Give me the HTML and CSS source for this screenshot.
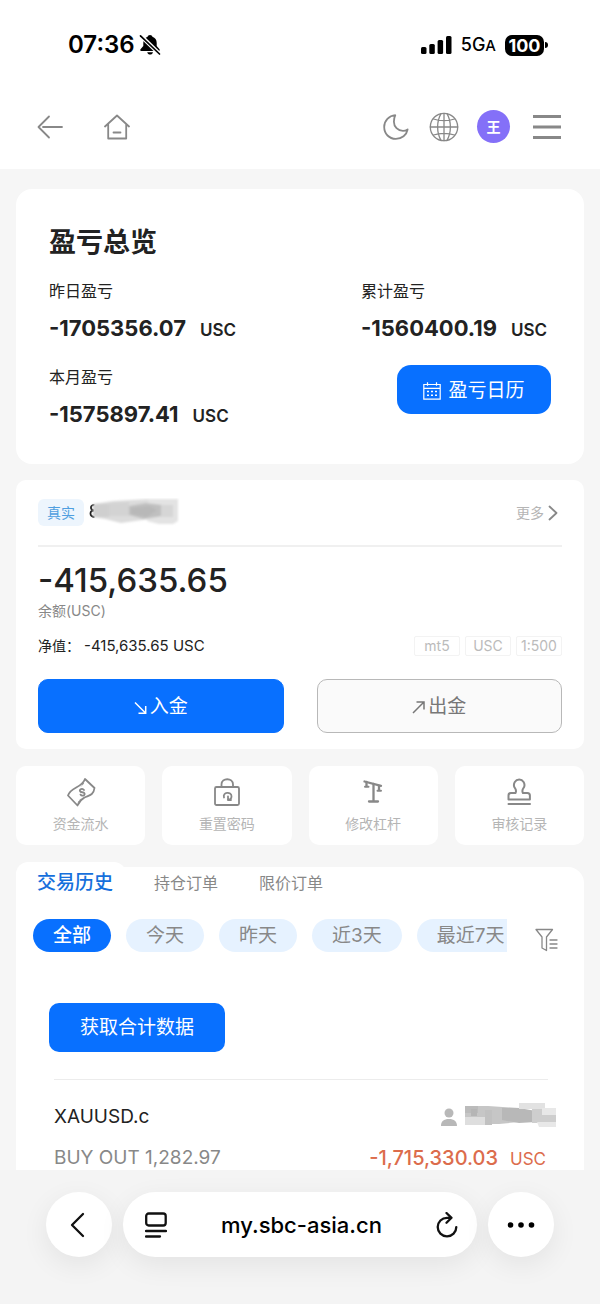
FILE: index.html
```
<!DOCTYPE html>
<html lang="zh-CN">
<head>
<meta charset="utf-8">
<meta name="viewport" content="width=device-width, initial-scale=1">
<title>盈亏总览</title>
<link rel="stylesheet" href="styles.css">
</head>
<body>
<div class="screen">
  <div class="status">
    <div class="status-left">
      <span class="clock">07:36</span>
      <svg width="22" height="22" viewBox="0 0 22 22" aria-hidden="true">
        <path d="M11 1c-1.300 0-2.200.8-2.400 1.800C5.800 3.800 4.300 6 4.300 9v3L1.500 15.300c-.6.900-.2 1.700.8 1.700h17.400c1 0 1.400-.8.8-1.700L17.700 12V9c0-3-1.500-5.200-4.300-6.200C13.200 1.800 12.300 1 11 1zM8.200 18.300c.4 1.400 1.500 2.300 2.900 2.300s2.500-.9 2.900-2.300z" fill="#000"/>
        <path d="M1.500 1.500 20.500 20" stroke="#fff" stroke-width="4"/>
        <path d="M1.500 1.800 20.500 20" stroke="#000" stroke-width="1.700" stroke-linecap="round"/>
      </svg>
    </div>
    <div class="status-right">
      <svg width="31" height="20" viewBox="0 0 31 20" aria-hidden="true">
        <rect x="0" y="12" width="5.500" height="7" rx="1.500"/><rect x="8.300" y="9" width="5.500" height="10" rx="1.500"/><rect x="16.600" y="5" width="5.500" height="14" rx="1.500"/><rect x="25" y="1" width="5.500" height="18" rx="1.500"/>
      </svg>
      <span class="network">5G<small>A</small></span>
      <span class="battery">100</span>
    </div>
  </div>

  <header class="nav">
    <button class="icon-btn" aria-label="返回">
      <svg width="26" height="24" viewBox="0 0 26 24" class="line"><path d="M12 1.500 1.500 12 12 22.500M6 12h19"/></svg>
    </button>
    <button class="icon-btn home" aria-label="首页">
      <svg width="26" height="26" viewBox="0 0 26 26" class="line"><path d="M1 12.500 13 1.500l12 11M4.200 10v14.500h18V10M9.500 18.500h7"/></svg>
    </button>
    <div class="nav-right">
      <button class="icon-btn" aria-label="夜间模式">
        <svg width="28" height="28" viewBox="0 0 28 28" class="line"><path d="M12.300 2.200C6 2.700 1.200 7.700 1.200 14c0 6.800 5 11.900 11.600 11.900 6 0 10.800-3.800 11.800-9.400-1.500 1-3 1.400-4.600 1.400-5.200 0-9.100-4.200-9.100-9.200 0-2.300.4-4.400 1.400-6.500z"/></svg>
      </button>
      <button class="icon-btn" aria-label="语言">
        <svg width="30" height="30" viewBox="0 0 30 30" class="line thin"><circle cx="15" cy="15" r="13.700"/><path d="M1.300 15h27.400M15 1.300v27.400M4.500 7c6 2.200 15 2.200 21 0M4.500 23c6-2.200 15-2.200 21 0M12 1.600c-4.500 8-4.500 18.800 0 26.800M18 1.600c4.500 8 4.500 18.800 0 26.800"/></svg>
      </button>
      <button class="avatar">王</button>
      <button class="icon-btn menu" aria-label="菜单">
        <svg width="28" height="26" viewBox="0 0 28 26" stroke="#888" stroke-width="3"><path d="M0 2.500h28M0 13h28M0 23.500h28"/></svg>
      </button>
    </div>
  </header>

  <main class="content">
    <section class="card overview">
      <h1>盈亏总览</h1>
      <div class="stats">
        <div class="stat"><span>昨日盈亏</span><p><strong>-1705356.07</strong><b>USC</b></p></div>
        <div class="stat"><span>累计盈亏</span><p><strong>-1560400.19</strong><b>USC</b></p></div>
        <div class="stat"><span>本月盈亏</span><p><strong>-1575897.41</strong><b>USC</b></p></div>
        <button class="calendar">
          <svg width="18" height="18" viewBox="0 0 18 18" fill="none" stroke="#fff" stroke-width="1.200" aria-hidden="true"><path d="M.8 2.500h16.400v14.700H.8zM.8 6.300h16.400M4.500.3v3.400M13.500.3v3.400"/><path d="M4 9.500h10.500M4 13.200h10.500" stroke-width="1.500" stroke-dasharray="2 2"/></svg>
          盈亏日历
        </button>
      </div>
    </section>

    <section class="card account">
      <div class="account-head">
        <span class="badge">真实</span>
        <svg class="mask" width="92" height="30" viewBox="0 0 92 30" aria-hidden="true">
          <defs><filter id="soft" x="-10%" y="-20%" width="120%" height="140%"><feGaussianBlur stdDeviation="1"/></filter></defs>
          <path d="M5.500 7Q2 7 2 9.500T5 12.500Q1.500 12.500 1.500 15.500T5.500 19" fill="none" stroke="#222" stroke-width="1.800"/>
          <g filter="url(#soft)">
            <path d="M4 6 24 3 60 1v20l-28 4-16-4-12-2z" fill="#dcdcdc"/><path d="M4 6h16v13H4z" fill="#cfcfcf"/><path d="M20 5l20-1v14H20z" fill="#d3d3d3"/>
            <path d="M59 1h30v22l-5 3H70l-12-3z" fill="#e3e3e3"/>
            <path d="M40 8l17-3 16 2v11l-18 3-15-4z" fill="#c0c0c0"/><path d="M42 10l18-2 8 4-10 7-16-3z" fill="#b8b8b8"/><path d="M72 7h12v12H72z" fill="#d6d6d6"/>
          </g>
        </svg>
        <a class="more" href="#">更多
          <svg width="10" height="16" viewBox="0 0 10 16" class="line" aria-hidden="true"><path d="M1.500 1.500 8.500 8l-7 6.500"/></svg>
        </a>
      </div>
      <p class="balance">-415,635.65</p>
      <p class="balance-label">余额(USC)</p>
      <div class="net-row">
        <p class="net"><span>净值：</span><span>-415,635.65 USC</span></p>
        <div class="tags"><span>mt5</span><span>USC</span><span>1:500</span></div>
      </div>
      <div class="actions">
        <button class="action primary"><svg width="13" height="13" viewBox="0 0 13 13" aria-hidden="true"><path d="M1 1.500 11.500 12M11.700 5v7.200H4.500"/></svg>入金</button>
        <button class="action"><svg width="13" height="13" viewBox="0 0 13 13" aria-hidden="true"><path d="M1 12 11.700 1.300M4.500 1h7.500v7.500"/></svg>出金</button>
      </div>
    </section>

    <nav class="tools">
      <button class="card tool">
        <svg width="30" height="30" viewBox="0 0 30 30" class="line" aria-hidden="true"><path d="M2 18.500C5 9.500 15.500 11.500 19 2L28.500 11c-1 8-6.500 7.500-10 9.500-3.500 2-5 3.500-7 8z"/><path d="M18 13c-1.500-2.200-5-.8-4 1.200.8 1.900 3.600.2 4.500 2.100.9 2.200-2.700 3.300-4 1.300"/><path d="M17.500 6.500l-2 2.500M12.500 25l2-2.800" stroke-width="1" stroke-dasharray="1.500 1.500"/></svg>
        <span>资金流水</span>
      </button>
      <button class="card tool">
        <svg width="30" height="30" viewBox="0 0 30 30" class="line" aria-hidden="true"><rect x="3" y="10" width="24" height="18" rx="1.500"/><path d="M9.500 10V7.500C9.500.5 21 .5 21 7.500V10M12 20.500c-1.800-5.500 7.500-6.500 7.500-1.300 0 2.300-1.500 3.600-3.700 3.800M16 19.500V23h3"/></svg>
        <span>重置密码</span>
      </button>
      <button class="card tool">
        <svg width="30" height="30" viewBox="0 0 30 30" class="line" aria-hidden="true"><path d="M6.500 4.500 23 8.800" stroke-width="2.300"/><path d="M15.500 7v17M11 24.500h9M8.500 5v4M21 9v4" stroke-width="2.300"/><path d="M7 9.800h3.500M19.500 13.800h3.500" stroke-width="2"/></svg>
        <span>修改杠杆</span>
      </button>
      <button class="card tool">
        <svg width="30" height="30" viewBox="0 0 30 30" class="line" aria-hidden="true"><path d="M4.500 22.500v-4c0-1.500 1-2.500 2.500-2.500h4.500c1.500-2.800 0-4-1.200-6-1.300-3.500 1-7.500 4.900-7.500s6.200 4 4.900 7.500c-1.200 2-2.700 3.200-1.200 6h4.500c1.500 0 2.500 1 2.500 2.500v4zM4.500 27h21.500" stroke-width="2"/></svg>
        <span>审核记录</span>
      </button>
    </nav>

    <section class="history">
      <div class="tabs">
        <button class="tab active">交易历史</button>
        <button class="tab">持仓订单</button>
        <button class="tab">限价订单</button>
      </div>
      <div class="filters">
        <div class="chips">
          <button class="chip on">全部</button>
          <button class="chip">今天</button>
          <button class="chip">昨天</button>
          <button class="chip">近3天</button>
          <button class="chip">最近7天</button>
        </div>
        <button class="icon-btn filter" aria-label="筛选">
          <svg width="23" height="24" viewBox="0 0 23 24" class="line thin" aria-hidden="true"><path d="M1 1.500h16.500l-6 7.500v13.500L7 20V9zM15 12h7M15 16h7M15 20h7"/></svg>
        </button>
      </div>
      <button class="total">获取合计数据</button>
      <article class="order">
        <div class="order-line">
          <h2>XAUUSD.c</h2>
          <svg class="owner" width="120" height="28" viewBox="0 0 120 28" aria-hidden="true">
            <circle cx="11" cy="10" r="4.500" fill="#b8b8b8"/><path d="M3 23c-.3-4.500 3-7 8-7s8 2.500 8 7z" fill="#b8b8b8"/>
            <path d="M27 3h23l31 2v14l-20 2H27z" fill="#c6c6c6"/><path d="M27 3h13v7H27z" fill="#bbb"/><path d="M33 6h6v7h-6z" fill="#b5b5b5"/><path d="M27 14h20v8H27z" fill="#dedede"/><path d="M47 7h7v15h-7z" fill="#c1c1c1"/><path d="M64 5h17l17 3v11l-17 1-17-3z" fill="#b8b8b8"/><path d="M81 0h26v6H81z" fill="#e2e2e2"/><path d="M94 6h24v14H94z" fill="#cecece"/><path d="M104 5h14v7h-14zM99 19h19v5h-17z" fill="#e8e8e8"/>
          </svg>
        </div>
        <div class="order-line">
          <p class="side">BUY OUT 1,282.97</p>
          <p class="loss"><span>-1,715,330.03</span><small>USC</small></p>
        </div>
      </article>
    </section>
  </main>

  <footer class="browser">
    <button class="round" aria-label="后退"><svg width="18" height="26" viewBox="0 0 18 26" class="ink" aria-hidden="true"><path d="M13 2 2 13l11 11"/></svg></button>
    <div class="address">
      <button class="icon-btn" aria-label="页面菜单"><svg width="22" height="26" viewBox="0 0 22 26" class="ink" aria-hidden="true"><rect x="1.200" y="1.500" width="19.500" height="12" rx="2.500"/><path d="M1 19h20M1 24.500h14"/></svg></button>
      <input type="text" value="my.sbc-asia.cn" aria-label="网址">
      <button class="icon-btn" aria-label="刷新"><svg width="22" height="26" viewBox="0 0 22 26" class="ink" aria-hidden="true"><path d="M15.500 5.800H11a9.300 9.300 0 1 0 9.300 9.300M10.500 1l5 4.800-5 5"/></svg></button>
    </div>
    <button class="round" aria-label="更多选项"><svg width="28" height="8" viewBox="0 0 28 8" aria-hidden="true"><circle cx="3.500" cy="4" r="2.800"/><circle cx="14" cy="4" r="2.800"/><circle cx="24.500" cy="4" r="2.800"/></svg></button>
  </footer>
</div>
</body>
</html>
```
FILE: styles.css
```
* { box-sizing: border-box; }

body {
  margin: 0;
  background: #f6f6f6;
  color: #222;
  font-family: Inter, "Noto Sans CJK SC", sans-serif;
  font-size: 16px;
  line-height: 24px;
}

h1, h2, p { margin: 0; font-weight: 400; }
svg { display: block; flex: none; }
button, input { font: inherit; color: inherit; border: 0; padding: 0; background: none; }
button { cursor: pointer; white-space: nowrap; }

.line { fill: none; stroke: #888; stroke-width: 1.8; stroke-linejoin: round; stroke-linecap: round; }
.thin { stroke-width: 1.3; }
.ink { fill: none; stroke: #111; stroke-width: 2.3; stroke-linejoin: round; stroke-linecap: round; }

.screen { min-height: 100vh; display: flex; flex-direction: column; }

/* Phone status bar */
.status {
  display: flex;
  justify-content: space-between;
  align-items: center;
  height: 88px;
  padding: 2px 56px 0 68px;
  background: #fff;
  color: #000;
}
.status-left { display: flex; align-items: center; gap: 4px; }
.status-right { display: flex; align-items: center; gap: 9px; }
.clock { font-size: 24px; font-weight: 600; }
.network { font-size: 18px; font-weight: 500; }
.network small { font-size: 15px; }
.battery {
  position: relative;
  width: 39px;
  border-radius: 7px;
  background: #000;
  color: #fff;
  font-size: 18px;
  font-weight: 700;
  line-height: 21px;
  text-align: center;
}
.battery::after {
  content: "";
  position: absolute;
  top: 7px;
  right: -4px;
  width: 3px;
  height: 6px;
  border-radius: 0 3px 3px 0;
  background: #000;
}

/* Site header */
.nav {
  display: flex;
  align-items: center;
  height: 81px;
  padding: 0 39px 4px 37px;
  background: #fff;
}
.icon-btn { display: flex; align-items: center; }
.home { margin-left: 41px; }
.nav-right { display: flex; align-items: center; gap: 18px; margin-left: auto; }
.avatar {
  width: 33px;
  height: 33px;
  border-radius: 50%;
  background: #8470f8;
  color: #fff;
  font-size: 14px;
  font-weight: 700;
}
.menu { margin-left: 5px; }

.content { padding: 20px 16px 0; }
.card { background: #fff; border-radius: 10px; }

/* Profit overview */
.overview { padding: 36px 33px; border-radius: 16px; }
.overview h1 { font-size: 27px; font-weight: 700; line-height: 36px; }
.stats {
  display: grid;
  grid-template-columns: 1fr minmax(190px, auto);
  row-gap: 23px;
  margin-top: 18px;
}
.stat p { display: flex; align-items: baseline; gap: 14px; height: 28px; margin-top: 11px; line-height: 28px; }
.stat strong { font-size: 22px; font-weight: 700; }
.stat b { font-size: 17px; font-weight: 600; }
.calendar {
  display: flex;
  align-items: center;
  justify-content: center;
  gap: 7px;
  width: 154px;
  height: 49px;
  padding-top: 2px;
  justify-self: end;
  border-radius: 14px;
  background: #0870ff;
  color: #fff;
  font-size: 19px;
}

/* Trading account */
.account { margin-top: 16px; padding: 0 22px 16px; }
.account-head {
  display: flex;
  align-items: center;
  gap: 5px;
  height: 67px;
  border-bottom: 2px solid #f0f0f0;
}
.badge {
  padding: 0 9px;
  border-radius: 6px;
  background: #edf5fd;
  color: #4f9fe0;
  font-size: 14px;
  line-height: 27px;
}
.more {
  display: flex;
  align-items: center;
  gap: 4px;
  margin-left: auto;
  padding-right: 4px;
  color: #b5b5b5;
  font-size: 14px;
  text-decoration: none;
}
.balance { margin-top: 13px; font-size: 33px; font-weight: 500; line-height: 40px; }
.balance-label { color: #888; font-size: 14px; line-height: 22px; }
.net-row {
  display: flex;
  justify-content: space-between;
  align-items: center;
  margin-top: 12px;
  font-size: 14px;
}
.net { display: flex; gap: 4px; }
.net span + span { font-size: 15px; }
.tags { display: flex; gap: 5px; color: #bbb; }
.tags span {
  min-width: 46px;
  border: 1px solid #f3f3f3;
  border-radius: 2px;
  line-height: 18px;
  text-align: center;
}
.actions { display: grid; grid-template-columns: 1fr 1fr; gap: 33px; margin-top: 21px; }
.action {
  display: flex;
  align-items: center;
  justify-content: center;
  gap: 3px;
  height: 54px;
  padding-top: 2px;
  border: 1px solid #b8b8b8;
  border-radius: 10px;
  background: #fafafa;
  color: #777;
  font-size: 19px;
}
.action svg { fill: none; stroke: currentColor; stroke-width: 1.5; }
.primary { border-color: #0870ff; background: #0870ff; color: #fff; }

/* Shortcuts */
.tools { display: grid; grid-template-columns: repeat(4, 1fr); gap: 17px; margin-top: 17px; }
.tool {
  display: flex;
  flex-direction: column;
  align-items: center;
  gap: 7px;
  padding: 11px 0;
  color: #b5b5b5;
  font-size: 14px;
  line-height: 20px;
}

/* Trade history */
.history {
  position: relative;
  margin-top: 22px;
  border-radius: 16px 16px 0 0;
  background: #fff;
}
.history::before {
  content: "";
  position: absolute;
  top: -5px;
  left: 0;
  width: 110px;
  height: 24px;
  border-radius: 12px 12px 0 0;
  background: #fff;
}
.tabs { position: relative; display: flex; height: 32px; align-items: center; padding-left: 21px; gap: 41px; color: #888; }
.active { color: #1670dc; font-size: 19px; font-weight: 500; }
.filters { display: flex; align-items: center; margin-top: 19px; padding: 0 26px 0 17px; }
.chips { display: flex; flex: 1; gap: 15px; min-width: 0; overflow: hidden; }
.chip {
  flex: none;
  padding: 1px 20px 0;
  border-radius: 17px;
  background: #e6f2ff;
  color: #888;
  font-size: 19px;
  line-height: 32px;
}
.on { background: #0870ff; color: #fff; font-weight: 500; }
.filter { margin: 10px 0 0 28px; }
.total {
  margin: 51px 0 0 33px;
  padding: 1px 31px 0;
  border-radius: 10px;
  background: #0870ff;
  color: #fff;
  font-size: 19px;
  line-height: 48px;
}
.order { margin: 27px 36px 0 38px; border-top: 1px solid #ececec; padding-top: 23px; }
.order-line { display: flex; justify-content: space-between; align-items: center; height: 28px; font-size: 19px; }
.order-line + .order-line { height: 24px; margin-top: 15px; }
.order h2 { font-size: 19px; }
.owner { margin-right: -10px; }
.side { color: #888; }
.loss { display: flex; align-items: baseline; gap: 12px; padding-right: 2px; color: #dc6c4c; }
.loss span { font-size: 20px; font-weight: 500; }
.loss small { font-size: 17px; }

/* Browser toolbar */
.browser {
  display: flex;
  flex: 1;
  align-items: flex-start;
  gap: 11px;
  padding: 22px 46px 46px;
  background: #f4f4f4;
}
.round, .address { height: 65px; background: #fff; box-shadow: 0 8px 28px rgba(0, 0, 0, 0.07); }
.round { display: flex; flex: none; align-items: center; justify-content: center; width: 66px; border-radius: 50%; }
.address { display: flex; flex: 1; min-width: 0; align-items: center; padding: 0 19px 0 22px; border-radius: 33px; }
.address input { flex: 1; min-width: 0; color: #000; font-size: 22px; font-weight: 500; line-height: 32px; text-align: center; }
```
